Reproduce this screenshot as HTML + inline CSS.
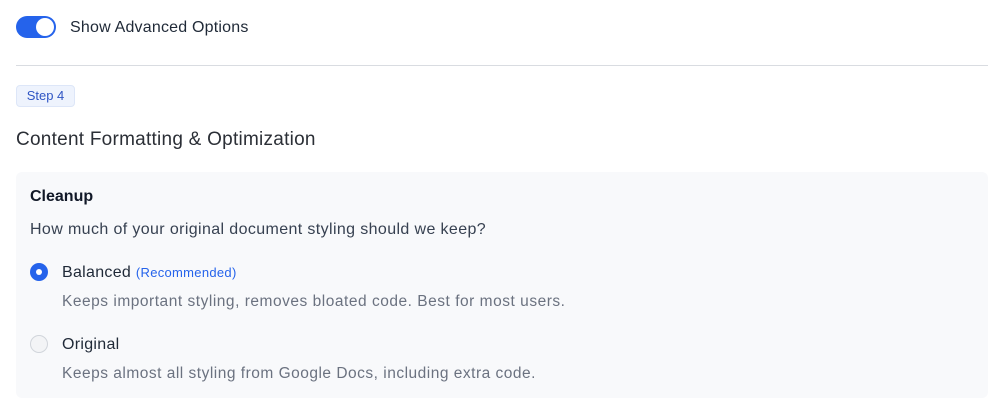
<!DOCTYPE html>
<html><head><style>
body{margin:0;background:#fff;font-family:"Liberation Sans",sans-serif;color:#1f2937;width:1004px;height:414px;overflow:hidden;position:relative}
.a{position:absolute;white-space:nowrap}
</style></head><body>
<div class="a" style="left:16px;top:16px;width:40px;height:22px;border-radius:11px;background:#2563eb"></div>
<div class="a" style="left:36px;top:18px;width:18px;height:18px;border-radius:50%;background:#fff"></div>
<div class="a" style="left:70px;top:18px;font-size:16px;line-height:20px;color:#1f2937;letter-spacing:0.2px">Show Advanced Options</div>
<div class="a" style="left:16px;top:65px;width:972px;height:1px;background:#d9dce1"></div>
<div class="a" style="left:16px;top:85px;width:59px;height:22px;border-radius:4px;background:#eef3fd;border:1px solid #dde6f8;box-sizing:border-box;color:#2f55c4;font-size:13px;line-height:20px;text-align:center">Step 4</div>
<div class="a" style="left:16px;top:128px;font-size:19px;line-height:24px;color:#2b2f36;letter-spacing:0.25px">Content Formatting &amp; Optimization</div>
<div class="a" style="left:16px;top:172px;width:972px;height:226px;background:#f8f9fb;border-radius:6px"></div>
<div class="a" style="left:30px;top:187px;font-size:16px;font-weight:bold;line-height:20px;color:#111827">Cleanup</div>
<div class="a" style="left:30px;top:220px;font-size:16px;line-height:20px;color:#374151;letter-spacing:0.38px">How much of your original document styling should we keep?</div>
<div class="a" style="left:30px;top:263px;width:18px;height:18px;border-radius:50%;background:#2563eb"></div>
<div class="a" style="left:36px;top:269px;width:6px;height:6px;border-radius:50%;background:#fff"></div>
<div class="a" style="left:62px;top:263px;font-size:16px;line-height:20px;color:#1f2937;letter-spacing:0.3px">Balanced <span style="font-size:13px;color:#2563eb;letter-spacing:0.3px">(Recommended)</span></div>
<div class="a" style="left:62px;top:292px;font-size:15.5px;line-height:20px;color:#6b7280;letter-spacing:0.52px">Keeps important styling, removes bloated code. Best for most users.</div>
<div class="a" style="left:30px;top:335px;width:18px;height:18px;border-radius:50%;background:#f3f4f6;border:1px solid #d1d5db;box-sizing:border-box"></div>
<div class="a" style="left:62px;top:335px;font-size:16px;line-height:20px;color:#1f2937;letter-spacing:0.3px">Original</div>
<div class="a" style="left:62px;top:364px;font-size:15.5px;line-height:20px;color:#6b7280;letter-spacing:0.5px">Keeps almost all styling from Google Docs, including extra code.</div>
</body></html>
